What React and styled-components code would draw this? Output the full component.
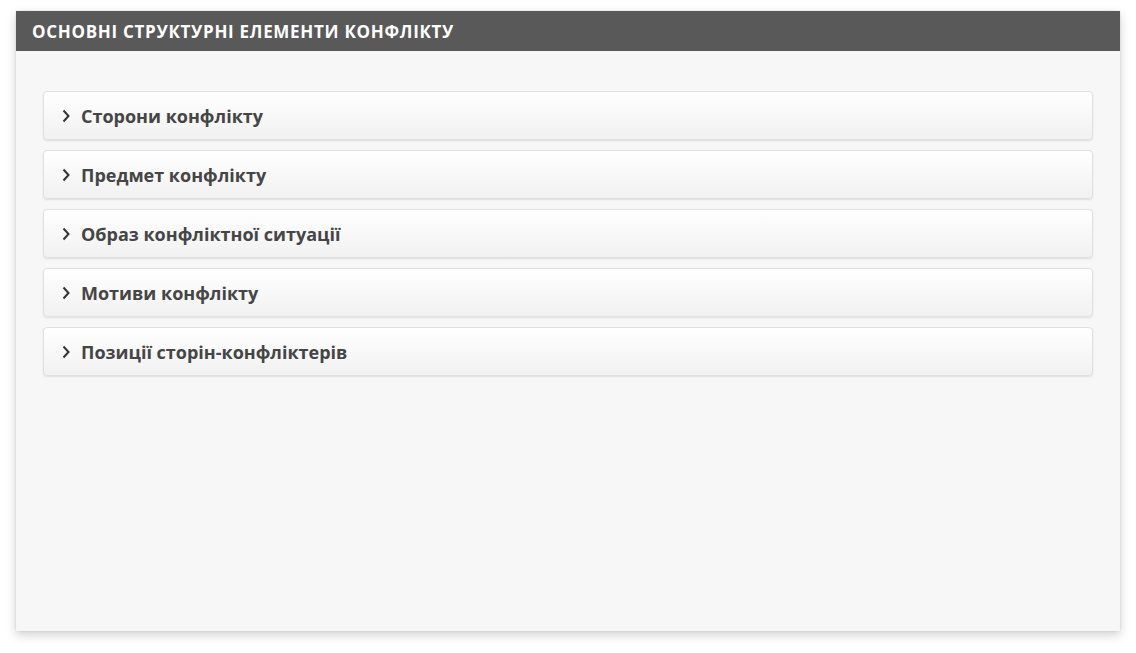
import React from "react";
import styled, { createGlobalStyle } from "styled-components";

const Global = createGlobalStyle`
  html, body { margin: 0; padding: 0; background: #ffffff; }
  body { font-family: "Open Sans", "Noto Sans", sans-serif; }
`;

const Page = styled.div`
  padding: 11px 16px 22px 16px;
  width: 1104px;
`;

const Panel = styled.section`
  background: #f7f7f7;
  box-shadow: 0 4px 10px rgba(0, 0, 0, 0.18), 0 0 2px rgba(0, 0, 0, 0.12);
  height: 620px;
  display: flex;
  flex-direction: column;
`;

const Header = styled.div`
  background: #595959;
  height: 40px;
  display: flex;
  align-items: center;
  padding: 0 16px;
  color: #ffffff;
  font-weight: 700;
  font-size: 17px;
  letter-spacing: 0.7px;
  text-transform: uppercase;
`;

const Body = styled.div`
  padding: 40px 27px 0 27px;
  display: flex;
  flex-direction: column;
  gap: 10px;
`;

const Item = styled.div`
  height: 49px;
  box-sizing: border-box;
  border: 1px solid #e0e0e0;
  border-radius: 4px;
  background: linear-gradient(to bottom, #ffffff 0%, #f1f1f1 100%);
  box-shadow: 0 1px 2px rgba(0, 0, 0, 0.1);
  display: flex;
  align-items: center;
  padding: 0 0 0 17px;
  gap: 10px;
  color: #454545;
  font-weight: 700;
  font-size: 18px;
  cursor: pointer;
`;

const Chevron = styled.svg`
  width: 10px;
  height: 14px;
  flex: none;
`;

const items = [
  "Сторони конфлікту",
  "Предмет конфлікту",
  "Образ конфліктної ситуації",
  "Мотиви конфлікту",
  "Позиції сторін-конфліктерів",
];

export default function App() {
  return (
    <>
      <Global />
      <Page>
        <Panel>
          <Header>Основні структурні елементи конфлікту</Header>
          <Body>
            {items.map((t) => (
              <Item key={t}>
                <Chevron viewBox="0 0 10 14">
                  <path d="M2.5 1.5 L7.5 7 L2.5 12.5" fill="none" stroke="#333" strokeWidth="2" />
                </Chevron>
                <span>{t}</span>
              </Item>
            ))}
          </Body>
        </Panel>
      </Page>
    </>
  );
}
